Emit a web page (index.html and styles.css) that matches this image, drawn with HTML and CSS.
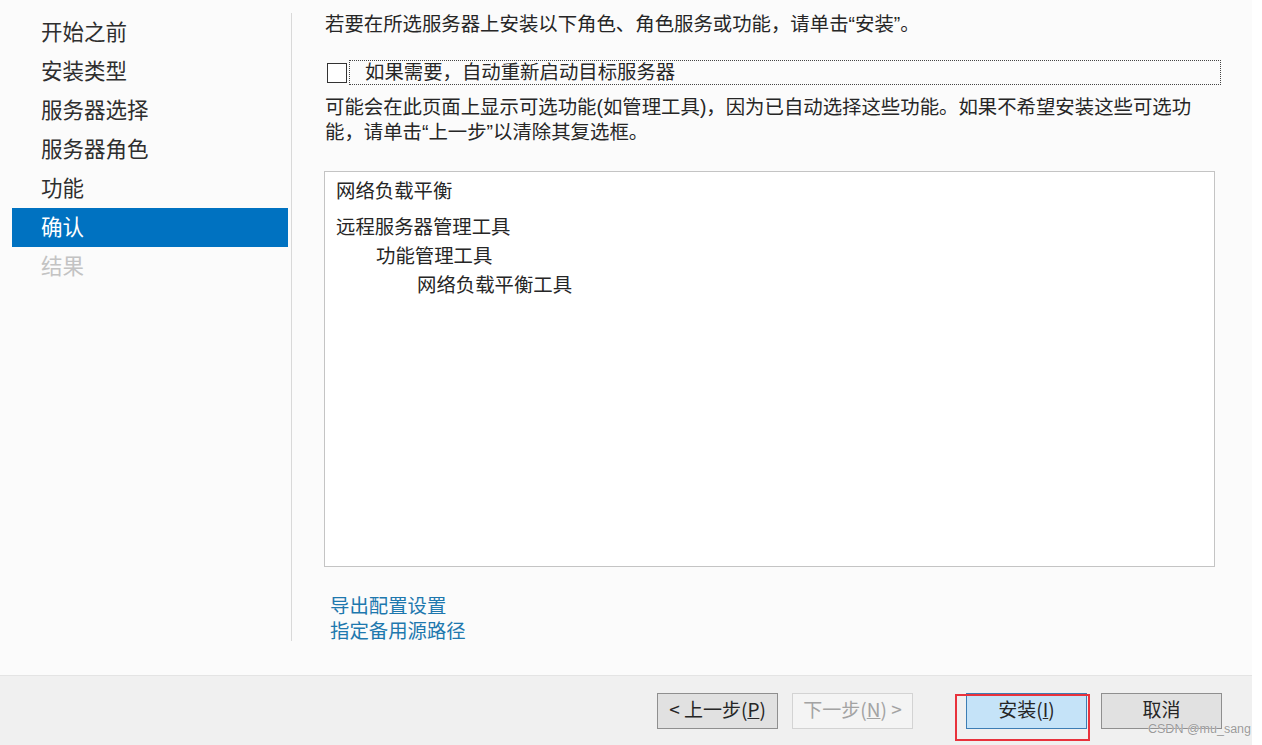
FILE: index.html
```html
<!DOCTYPE html>
<html lang="zh-CN">
<head>
<meta charset="utf-8">
<title>添加角色和功能向导 - 确认</title>
<link rel="stylesheet" href="styles.css">
</head>
<body>
<div class="dialog">
  <div class="content">
    <nav class="nav">
      <div class="nav-item">开始之前</div>
      <div class="nav-item">安装类型</div>
      <div class="nav-item">服务器选择</div>
      <div class="nav-item">服务器角色</div>
      <div class="nav-item">功能</div>
      <div class="nav-item selected">确认</div>
      <div class="nav-item disabled">结果</div>
    </nav>
    <div class="divider"></div>
    <main class="main">
      <p class="intro">若要在所选服务器上安装以下角色、角色服务或功能，请单击“安装”。</p>
      <div class="check-row">
        <span class="checkbox"></span>
        <span class="check-label">如果需要，自动重新启动目标服务器</span>
      </div>
      <p class="note">可能会在此页面上显示可选功能(如管理工具)，因为已自动选择这些功能。如果不希望安装这些可选功能，请单击“上一步”以清除其复选框。</p>
      <div class="listbox">
        <div class="li first">网络负载平衡</div>
        <div class="li">远程服务器管理工具</div>
        <div class="li lvl1">功能管理工具</div>
        <div class="li lvl2">网络负载平衡工具</div>
      </div>
      <div class="links">
        <a class="link">导出配置设置</a>
        <a class="link">指定备用源路径</a>
      </div>
    </main>
  </div>
  <footer class="footer">
    <button class="btn">&lt; 上一步(<u>P</u>)</button>
    <button class="btn disabled">下一步(<u>N</u>) &gt;</button>
    <button class="btn primary">安装(<u>I</u>)</button>
    <button class="btn">取消</button>
  </footer>
  <div class="highlight"></div>
  <div class="watermark">CSDN @mu_sang</div>
</div>
</body>
</html>
```

FILE: styles.css
```css
* { box-sizing: border-box; }
html, body { margin: 0; padding: 0; background: #ffffff; }
body {
  font-family: "Noto Sans CJK SC", "Noto Sans", "Liberation Sans", sans-serif;
  color: #262626;
}
.dialog {
  position: relative;
  width: 1252px;
  height: 745px;
  background: #fbfbfb;
  display: flex;
  flex-direction: column;
  overflow: hidden;
}
.content {
  display: flex;
  height: 675px;
}
.nav {
  width: 291px;
  padding: 13px 3px 0 12px;
  display: flex;
  flex-direction: column;
}
.nav-item {
  height: 39px;
  line-height: 35px;
  padding-left: 29px;
  font-size: 21.5px;
  color: #2e2e2e;
  white-space: nowrap;
}
.nav-item.selected { background: #0072c1; color: #ffffff; }
.nav-item.disabled { color: #c3c3c3; }
.divider {
  width: 1px;
  margin-top: 13px;
  height: 628px;
  background: #d9d9d9;
}
.main {
  flex: 1;
  padding: 12px 0 0 33px;
  font-family: "Liberation Sans", "Noto Sans CJK SC", sans-serif;
  font-size: 19.4px;
}
.intro {
  margin: 0;
  height: 25px;
  line-height: 25px;
  white-space: nowrap;
}
.check-row {
  margin-top: 23px;
  display: flex;
  align-items: center;
  height: 25px;
}
.checkbox {
  width: 20px;
  height: 20px;
  margin-left: 2px;
  border: 1px solid #333333;
  background: #ffffff;
  flex: none;
}
.check-label {
  margin-left: 2px;
  width: 872px;
  height: 25px;
  line-height: 22px;
  padding-left: 15px;
  border: 1px dotted #444444;
  white-space: nowrap;
}
.note {
  margin: 10px 0 0 0;
  width: 884px;
  height: 50px;
  line-height: 25px;
}
.listbox {
  margin-top: 26px;
  margin-left: -1px;
  width: 891px;
  height: 396px;
  background: #ffffff;
  border: 1px solid #c4c4c4;
  padding: 5px 0 0 11px;
}
.li {
  line-height: 29px;
  white-space: nowrap;
}
.li.first { margin-bottom: 7px; }
.li.lvl1 { padding-left: 40px; }
.li.lvl2 { padding-left: 81px; }
.links {
  margin-top: 27px;
  margin-left: 5px;
  display: flex;
  flex-direction: column;
}
.link {
  display: block;
  height: 25px;
  line-height: 25px;
  color: #1e78ae;
  cursor: pointer;
}
.footer {
  height: 70px;
  background: #f0f0f0;
  border-top: 1px solid #e4e4e4;
  display: flex;
  align-items: flex-start;
  justify-content: flex-end;
  padding: 17px 30px 0 0;
  gap: 14px;
}
.btn {
  width: 121px;
  height: 36px;
  font-family: inherit;
  font-size: 19px;
  color: #262626;
  background: #e1e1e1;
  border: 1px solid #8f8f8f;
  padding: 0 0 4px 0;
  line-height: 26px;
  flex: none;
}
.btn.disabled {
  background: #f4f4f4;
  border-color: #d3d3d3;
  color: #a3a3a3;
}
.btn.primary {
  margin-left: 39px;
  background: #c5e3f8;
  border-color: #3d7db4;
}
.highlight {
  position: absolute;
  left: 955px;
  top: 694px;
  width: 135px;
  height: 47px;
  border: 2px solid #e8323c;
  pointer-events: none;
}
.watermark {
  position: absolute;
  left: 1148px;
  top: 723px;
  line-height: 13px;
  font-family: "Liberation Sans", sans-serif;
  font-size: 12.5px;
  color: #9a9a9a;
  text-shadow: 0 0 1px #ffffff;
  white-space: nowrap;
}
```
